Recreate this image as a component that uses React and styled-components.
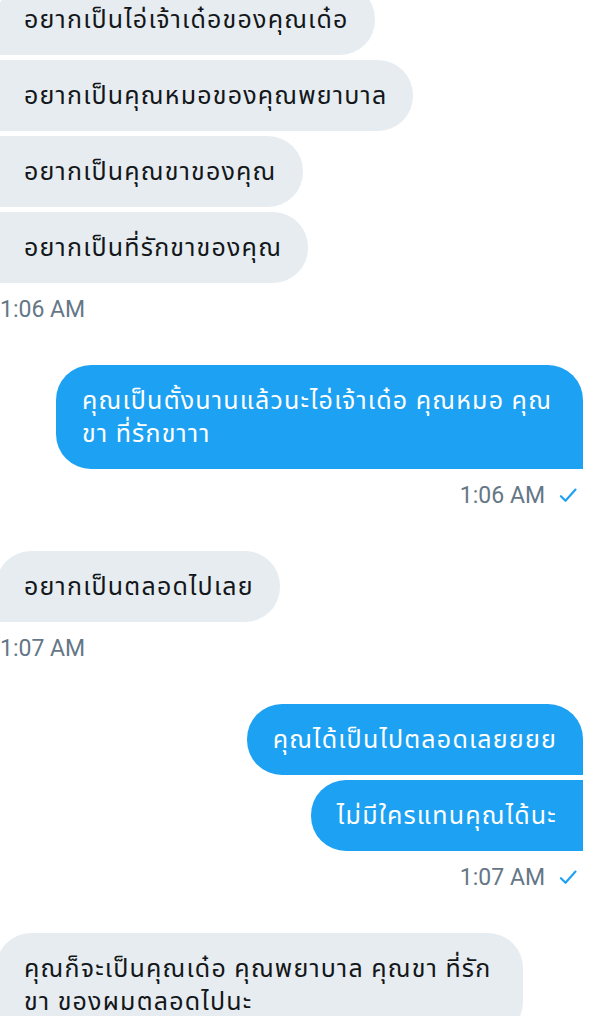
import React from "react";
import styled, { createGlobalStyle } from "styled-components";

const GlobalStyle = createGlobalStyle`
  html, body {
    margin: 0;
    padding: 0;
    background: #ffffff;
    overflow: hidden;
  }
  body {
    font-family: Roboto, "Noto Sans", "Noto Sans Thai", "DejaVu Sans", sans-serif;
    -webkit-font-smoothing: antialiased;
  }
`;

const R = "35px";

const Thread = styled.div({
  display: "flex",
  flexDirection: "column",
  margin: "-16px 24px 0 -4px",
});

const Group = styled.div((props) => ({
  display: "flex",
  flexDirection: "column",
  alignItems: props.$mine ? "flex-end" : "flex-start",
  gap: "5px",
}));

const Bubble = styled.div((props) => {
  const mine = props.$mine;
  const first = props.$first;
  return {
    boxSizing: "border-box",
    maxWidth: "527px",
    width: props.$full ? "527px" : "auto",
    padding: mine ? "19px 26px 19px 26px" : "19px 26px 19px 28px",
    fontSize: "25px",
    letterSpacing: "1.2px",
    lineHeight: "33px",
    whiteSpace: "pre-line",
    color: mine ? "#ffffff" : "#14171a",
    backgroundColor: mine ? "#1da1f2" : "#e6ecf0",
    borderTopLeftRadius: mine ? R : first ? R : "0",
    borderTopRightRadius: mine ? (first ? R : "0") : R,
    borderBottomRightRadius: mine ? "0" : R,
    borderBottomLeftRadius: mine ? R : "0",
  };
});

const Meta = styled.div((props) => ({
  display: "flex",
  alignItems: "center",
  justifyContent: props.$mine ? "flex-end" : "flex-start",
  gap: "13px",
  height: "24px",
  margin: props.$mine ? "14px 5px 44px 0" : "14px 0 44px 4px",
  fontFamily: "Roboto, 'Liberation Sans', sans-serif",
  fontSize: "23px",
  color: "#657786",
}));

const Check = () => (
  <svg width="20" height="20" viewBox="0 0 24 24" fill="none">
    <path
      d="M3.5 13.5l5.5 5.5L21 5.5"
      stroke="#1da1f2"
      strokeWidth="2.6"
      strokeLinecap="round"
      strokeLinejoin="round"
    />
  </svg>
);

const conversation = [
  {
    mine: false,
    time: "1:06 AM",
    messages: [
      { text: "อยากเป็นไอ่เจ้าเด๋อของคุณเด๋อ" },
      { text: "อยากเป็นคุณหมอของคุณพยาบาล" },
      { text: "อยากเป็นคุณขาของคุณ" },
      { text: "อยากเป็นที่รักขาของคุณ" },
    ],
  },
  {
    mine: true,
    time: "1:06 AM",
    messages: [
      { text: "คุณเป็นตั้งนานแล้วนะไอ่เจ้าเด๋อ คุณหมอ คุณ\nขา ที่รักขาาา", full: true },
    ],
  },
  {
    mine: false,
    time: "1:07 AM",
    messages: [{ text: "อยากเป็นตลอดไปเลย" }],
  },
  {
    mine: true,
    time: "1:07 AM",
    messages: [{ text: "คุณได้เป็นไปตลอดเลยยยย" }, { text: "ไม่มีใครแทนคุณได้นะ" }],
  },
  {
    mine: false,
    time: "1:08 AM",
    messages: [
      { text: "คุณก็จะเป็นคุณเด๋อ คุณพยาบาล คุณขา ที่รัก\nขา ของผมตลอดไปนะ", full: true },
    ],
  },
];

function App() {
  return (
    <>
      <GlobalStyle />
      <Thread>
        {conversation.map((group, gi) => (
          <div key={gi}>
            <Group $mine={group.mine}>
              {group.messages.map((m, i) => (
                <Bubble key={i} $mine={group.mine} $first={i === 0} $full={m.full}>
                  {m.text}
                </Bubble>
              ))}
            </Group>
            <Meta $mine={group.mine}>
              <span>{group.time}</span>
              {group.mine && <Check />}
            </Meta>
          </div>
        ))}
      </Thread>
    </>
  );
}

export default App;
